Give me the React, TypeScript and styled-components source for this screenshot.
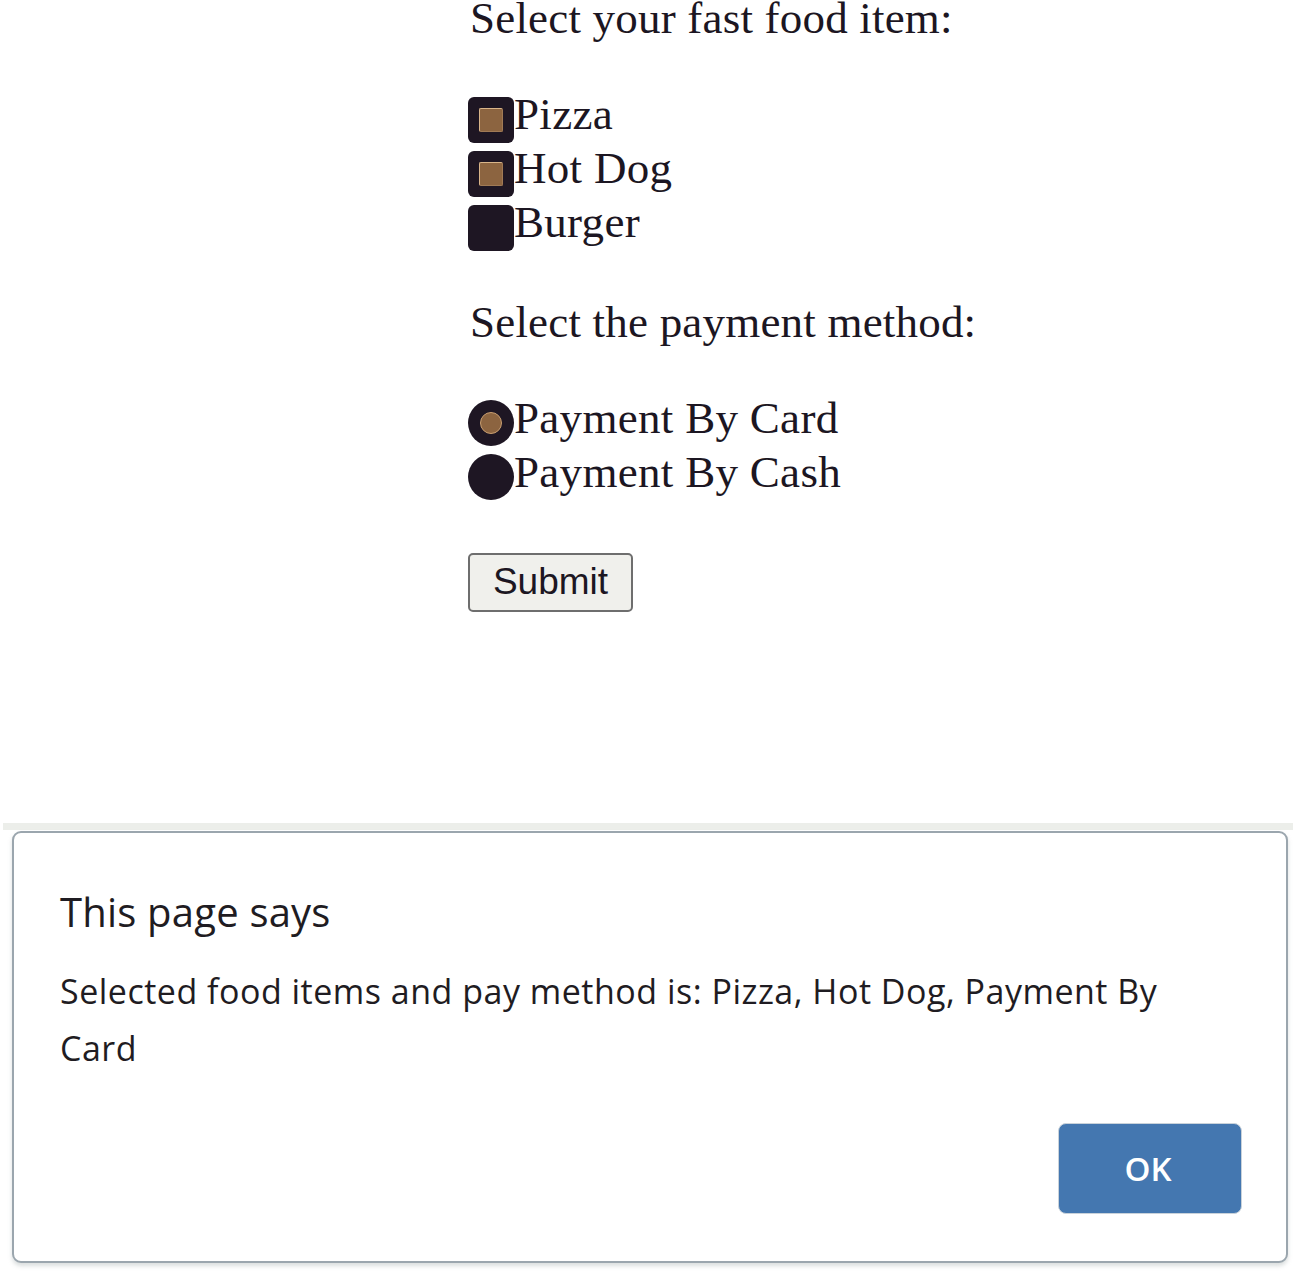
import React from "react";
import styled, { createGlobalStyle } from "styled-components";

const Global = createGlobalStyle`
  html, body { margin: 0; padding: 0; background: #ffffff; }
  body { width: 1300px; height: 1280px; overflow: hidden; }
`;

const Page = styled.div`
  display: flex;
  flex-direction: column;
  width: 1300px;
`;

const Form = styled.form`
  display: flex;
  flex-direction: column;
  padding-left: 468px;
  font-family: "Liberation Serif", "Times New Roman", serif;
  color: #1c1622;
`;

const Heading = styled.div<{ $top: number; $lh: number }>`
  font-size: 45px;
  line-height: ${(p) => p.$lh}px;
  letter-spacing: 0.2px;
  margin-top: ${(p) => p.$top}px;
  padding-left: 2px;
`;

const Options = styled.div<{ $top: number }>`
  display: flex;
  flex-direction: column;
  margin-top: ${(p) => p.$top}px;
`;

const OptionRow = styled.label`
  display: flex;
  align-items: flex-start;
  height: 54px;
  font-size: 45px;
  line-height: 54px;
  letter-spacing: 0.3px;
`;

const CheckBox = styled.span<{ $checked: boolean }>`
  box-sizing: border-box;
  width: 46px;
  height: 46px;
  margin-top: 10px;
  border-radius: 6px;
  background: #1e1623;
  display: flex;
  align-items: center;
  justify-content: center;
  flex-shrink: 0;
  &::after {
    content: "";
    display: ${(p) => (p.$checked ? "block" : "none")};
    width: 22px;
    height: 22px;
    background: #8c6440;
    border: 1.5px solid #d9b58a;
    border-right-color: #a07a55;
    border-bottom-color: #a07a55;
    border-radius: 2px;
  }
`;

const RadioDot = styled.span<{ $checked: boolean }>`
  box-sizing: border-box;
  width: 46px;
  height: 46px;
  margin-top: 9px;
  border-radius: 50%;
  background: #1e1623;
  display: flex;
  align-items: center;
  justify-content: center;
  flex-shrink: 0;
  &::after {
    content: "";
    display: ${(p) => (p.$checked ? "block" : "none")};
    width: 20px;
    height: 20px;
    background: #8c6440;
    border: 1.5px solid #c99e70;
    border-radius: 50%;
  }
`;

const OptionText = styled.span`
  white-space: nowrap;
`;

const SubmitButton = styled.button`
  align-self: flex-start;
  box-sizing: border-box;
  margin-top: 54px;
  width: 165px;
  height: 59px;
  border: 2px solid #6e6e6e;
  border-radius: 5px;
  background: #f0f0ec;
  font-family: "Liberation Sans", Arial, sans-serif;
  font-size: 37px;
  color: #1c1622;
  padding: 0 0 2px 0;
`;

const Overlay = styled.div`
  margin-top: 211px;
  display: flex;
  flex-direction: column;
`;

const OverlayEdge = styled.div`
  margin: 0 7px 0 3px;
  height: 7px;
  background: #eceeea;
`;

const Dialog = styled.div`
  box-sizing: border-box;
  margin: 1px 12px 0 12px;
  width: 1276px;
  height: 432px;
  border: 2px solid #9ba6ae;
  border-radius: 9px;
  box-shadow: 0 3px 4px rgba(150, 160, 160, 0.35);
  background: #ffffff;
  display: flex;
  flex-direction: column;
  padding: 0 44px 47px 46px;
  font-family: "Open Sans", "Noto Sans", sans-serif;
  color: #1f1c22;
`;

const DialogTitle = styled.div`
  margin-top: 54px;
  font-size: 40px;
  line-height: 50px;
  letter-spacing: 0.2px;
`;

const DialogMessage = styled.div`
  margin-top: 26px;
  font-size: 34px;
  line-height: 57px;
  letter-spacing: 0.5px;
  max-width: 1140px;
`;

const DialogFooter = styled.div`
  margin-top: auto;
  display: flex;
  justify-content: flex-end;
`;

const OkButton = styled.button`
  width: 184px;
  height: 91px;
  border: 1px solid #c9d2da;
  border-radius: 8px;
  background: #4477b0;
  color: #ffffff;
  font-family: "Open Sans", "Noto Sans", sans-serif;
  font-weight: 600;
  font-size: 33px;
  padding: 0 4px 0 0;
`;

const foods = [
  { label: "Pizza", checked: true },
  { label: "Hot Dog", checked: true },
  { label: "Burger", checked: false },
];

const payments = [
  { label: "Payment By Card", checked: true },
  { label: "Payment By Cash", checked: false },
];

export default function App() {
  return (
    <Page>
      <Global />
      <Form onSubmit={(e) => e.preventDefault()}>
        <Heading $top={0} $lh={36}>Select your fast food item:</Heading>
        <Options $top={51}>
          {foods.map((f) => (
            <OptionRow key={f.label}>
              <CheckBox $checked={f.checked} />
              <OptionText>{f.label}</OptionText>
            </OptionRow>
          ))}
        </Options>
        <Heading $top={48} $lh={50}>Select the payment method:</Heading>
        <Options $top={44}>
          {payments.map((p) => (
            <OptionRow key={p.label}>
              <RadioDot $checked={p.checked} />
              <OptionText>{p.label}</OptionText>
            </OptionRow>
          ))}
        </Options>
        <SubmitButton type="submit">Submit</SubmitButton>
      </Form>
      <Overlay>
        <OverlayEdge />
        <Dialog role="alertdialog">
          <DialogTitle>This page says</DialogTitle>
          <DialogMessage>
            Selected food items and pay method is: Pizza, Hot Dog, Payment By Card
          </DialogMessage>
          <DialogFooter>
            <OkButton>OK</OkButton>
          </DialogFooter>
        </Dialog>
      </Overlay>
    </Page>
  );
}
